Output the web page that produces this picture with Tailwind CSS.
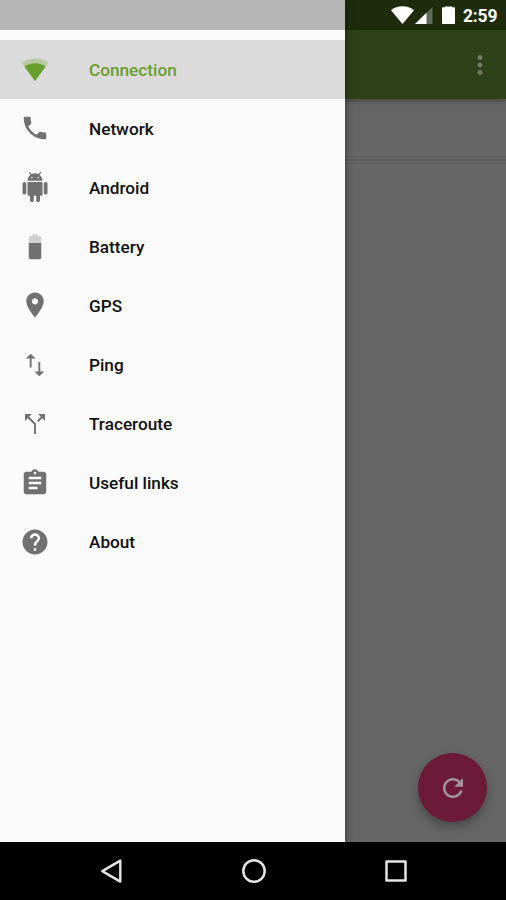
<!DOCTYPE html>
<html lang="en">
<head>
<meta charset="utf-8">
<meta name="viewport" content="width=device-width, initial-scale=1">
<title>Connection</title>
<script src="https://cdn.jsdelivr.net/npm/@tailwindcss/browser@4"></script>
</head>
<body class="font-['Roboto',sans-serif]">
<div class="relative flex h-[900px] w-[506px] flex-col overflow-hidden bg-[#656565]">
  <!-- Status bar -->
  <header class="flex h-[30px] shrink-0 items-center justify-end bg-[#1e2c0d] pr-[8px] text-white">
    <svg class="h-[18px] w-[23px]" viewBox="0 0 23 18" fill="currentColor"><path d="M11.500 18 0 4.200C3 1.700 7 .3 11.500 .3S20 1.700 23 4.200Z"/></svg>
    <svg class="ml-[1px] h-[17px] w-[18px]" viewBox="0 0 18 17" fill="currentColor"><path d="M17.500 0V17H0Z" opacity=".3"/><path d="M11.500 5.800V17H0Z"/></svg>
    <svg class="ml-[9px] h-[18px] w-[13px]" viewBox="0 0 13 18" fill="currentColor"><path d="M3 .5h7v.7h2.200c.5 0 .8.300.8.800v15.200c0 .5-.3.800-.8.800H.8c-.5 0-.8-.3-.8-.8V2c0-.5.3-.8.8-.8H3Z"/></svg>
    <span class="ml-[8px] w-[35px] pt-[2px] text-[17.500px] leading-[30px] font-bold tracking-[-0.2px] whitespace-nowrap">2:59</span>
  </header>
  <!-- Toolbar -->
  <div class="relative flex h-[69px] shrink-0 items-center justify-end bg-[#2f4118] pr-[11px] shadow-[0_2px_5px_rgba(0,0,0,0.3)]">
    <svg class="h-[30px] w-[30px] text-[#747b6b]" viewBox="0 0 24 24" fill="currentColor"><path d="M12 8c1.100 0 2-.9 2-2s-.9-2-2-2-2 .9-2 2 .9 2 2 2zm0 2c-1.100 0-2 .9-2 2s.9 2 2 2 2-.9 2-2-.9-2-2-2zm0 6c-1.100 0-2 .9-2 2s.9 2 2 2 2-.9 2-2-.9-2-2-2z"/></svg>
  </div>
  <main class="flex grow flex-col">
    <div class="h-[62px] shrink-0 border-b-2 border-[#5c5c5c]"></div>
    <div class="flex grow items-end justify-end pr-[19px] pb-[20px]">
      <button class="flex h-[69px] w-[69px] items-center justify-center rounded-full bg-[#6b1a38] text-[#a4959a] shadow-[0_5px_9px_rgba(0,0,0,0.28)]">
        <svg class="h-[30px] w-[30px]" viewBox="0 0 24 24" fill="currentColor"><path d="M17.650 6.350C16.200 4.900 14.210 4 12 4c-4.420 0-7.990 3.580-7.990 8s3.570 8 7.990 8c3.730 0 6.840-2.550 7.730-6h-2.080c-.82 2.330-3.040 4-5.650 4-3.310 0-6-2.690-6-6s2.690-6 6-6c1.660 0 3.140.69 4.220 1.780L13 11h7V4l-2.350 2.350z"/></svg>
      </button>
    </div>
  </main>
  <!-- System navigation -->
  <footer class="relative z-20 flex h-[58px] shrink-0 items-center justify-between bg-black px-[100px] text-[#e4e4e4]">
    <svg class="h-[26px] w-[22px]" viewBox="0 0 22 26" fill="none" stroke="currentColor" stroke-width="2.400" stroke-linejoin="round"><path d="M20.300 2.600v21L2.300 13.100Z"/></svg>
    <svg class="h-[26px] w-[26px]" viewBox="0 0 26 26" fill="none" stroke="currentColor" stroke-width="2.500"><circle cx="13" cy="13" r="10.700"/></svg>
    <svg class="mr-[-1px] h-[22px] w-[22px]" viewBox="0 0 22 22" fill="none" stroke="currentColor" stroke-width="2.500" stroke-linejoin="round"><path d="M1.500 1.500h19v19h-19Z"/></svg>
  </footer>

  <!-- Navigation drawer -->
  <aside class="absolute top-0 left-0 z-10 h-[842px] w-[345px] bg-[#fafafa] shadow-[1px_0_7px_rgba(0,0,0,0.4)]">
    <div class="h-[30px] bg-[#b6b6b6]"></div>
    <nav class="flex flex-col pt-[9.500px] text-[17.200px] font-medium text-[#111]">
      <a class="flex h-[59.120px] items-center bg-[#dbdbdb] pl-[20px] text-[#689f2c]">
        <svg class="h-[30px] w-[30px]" viewBox="0 0 24 24" fill="currentColor"><path d="M12.010 21.500 22.800 6.900C22.300 6.500 18.300 3.500 12 3.500S1.700 6.500 1.200 6.900L12.010 21.500z" opacity=".3"/><path d="M3.500 10 12.010 21.500 20.500 10C20 9.600 16.800 7.400 12 7.400S4 9.600 3.500 10z"/></svg>
        <span class="ml-[39px] pt-[3px]">Connection</span>
      </a>
      <a class="flex h-[59.120px] items-center pl-[20px]">
        <svg class="h-[30px] w-[30px] text-[#717171]" viewBox="0 0 24 24" fill="currentColor"><path d="M6.620 10.790c1.440 2.830 3.760 5.140 6.590 6.590l2.200-2.200c.27-.27.67-.36 1.020-.24 1.120.37 2.330.57 3.570.57.55 0 1 .45 1 1V20c0 .55-.45 1-1 1-9.390 0-17-7.610-17-17 0-.55.45-1 1-1h3.500c.55 0 1 .45 1 1 0 1.250.2 2.450.57 3.570.11.35.03.74-.25 1.020l-2.200 2.200z"/></svg>
        <span class="ml-[39px] pt-[3px]">Network</span>
      </a>
      <a class="flex h-[59.120px] items-center pl-[20px]">
        <svg class="h-[30px] w-[30px] text-[#717171]" viewBox="0 0 24 24" fill="currentColor"><path d="M6 18c0 .55.45 1 1 1h1v3.500c0 .83.67 1.500 1.500 1.500s1.500-.67 1.500-1.500V19h2v3.500c0 .83.67 1.500 1.500 1.500s1.500-.67 1.500-1.500V19h1c.55 0 1-.45 1-1V8H6v10zM3.500 8C2.670 8 2 8.670 2 9.500v7c0 .83.67 1.500 1.500 1.500S5 17.330 5 16.500v-7C5 8.670 4.330 8 3.500 8zm17 0c-.83 0-1.500.67-1.500 1.500v7c0 .83.67 1.500 1.500 1.500s1.500-.67 1.500-1.500v-7c0-.83-.67-1.500-1.500-1.500zm-4.970-5.840l1.300-1.300c.2-.2.2-.51 0-.71-.2-.2-.51-.2-.71 0l-1.480 1.480C13.850 1.230 12.950 1 12 1c-.96 0-1.860.23-2.660.63L7.850.15c-.2-.2-.51-.2-.71 0-.2.2-.2.51 0 .71l1.310 1.310C6.970 3.260 6 5.010 6 7h12c0-1.990-.97-3.750-2.470-4.840zM10 5H9V4h1v1zm5 0h-1V4h1v1z"/></svg>
        <span class="ml-[39px] pt-[3px]">Android</span>
      </a>
      <a class="flex h-[59.120px] items-center pl-[20px]">
        <svg class="h-[30px] w-[30px] text-[#717171]" viewBox="0 0 24 24" fill="currentColor"><path d="M17 5.330C17 4.600 16.400 4 15.670 4H14V2.500h-4V4H8.330C7.600 4 7 4.600 7 5.330V10h10V5.330z" opacity=".3"/><path d="M7 9.500v11.670C7 21.900 7.600 22.500 8.330 22.500h7.330c.74 0 1.340-.6 1.340-1.330V9.500H7z"/></svg>
        <span class="ml-[39px] pt-[3px]">Battery</span>
      </a>
      <a class="flex h-[59.120px] items-center pl-[20px]">
        <svg class="h-[30px] w-[30px] text-[#717171]" viewBox="0 0 24 24" fill="currentColor"><path d="M12 2C8.130 2 5 5.130 5 9c0 5.250 7 13 7 13s7-7.750 7-13c0-3.870-3.130-7-7-7zm0 9.500c-1.380 0-2.500-1.120-2.500-2.500s1.120-2.500 2.500-2.500 2.500 1.120 2.500 2.500-1.120 2.500-2.500 2.500z"/></svg>
        <span class="ml-[39px] pt-[2px]">GPS</span>
      </a>
      <a class="flex h-[59.120px] items-center pl-[20px]">
        <svg class="h-[30px] w-[30px] text-[#717171]" viewBox="0 0 24 24" fill="currentColor"><path d="M16.200 17.200V9.500h-1.500v7.700h-3.200L15.450 21l4-3.800h-3.250zM8.550 3L4.600 6.700h3.200v7.300h1.500V6.700h3.200L8.550 3z"/></svg>
        <span class="ml-[39px] pt-[2px]">Ping</span>
      </a>
      <a class="flex h-[59.120px] items-center pl-[20px]">
        <svg class="h-[30px] w-[30px] text-[#717171]" viewBox="0 0 24 24" fill="currentColor"><path d="M14.500 4l2.200 2.200-3.050 3.050 1.100 1.100 3.050-3.050L20 9.500V4zM9.500 4H4v5.500l2.200-2.200 5.050 5V20h1.500v-8.350L7.300 6.200z"/></svg>
        <span class="ml-[39px] pt-[2px]">Traceroute</span>
      </a>
      <a class="flex h-[59.120px] items-center pl-[20px]">
        <svg class="h-[30px] w-[30px] text-[#717171]" viewBox="0 0 24 24" fill="currentColor"><path d="M19 3h-4.180C14.400 1.840 13.300 1 12 1c-1.300 0-2.400.84-2.820 2H5c-1.100 0-2 .9-2 2v14c0 1.100.9 2 2 2h14c1.100 0 2-.9 2-2V5c0-1.100-.9-2-2-2zm-7 0c.55 0 1 .45 1 1s-.45 1-1 1-1-.45-1-1 .45-1 1-1zm2 14H7v-2h7v2zm3-4H7v-2h10v2zm0-4H7V7h10v2z"/></svg>
        <span class="ml-[39px] pt-[2px]">Useful links</span>
      </a>
      <a class="flex h-[59.120px] items-center pl-[20px]">
        <svg class="h-[30px] w-[30px] text-[#717171]" viewBox="0 0 24 24" fill="currentColor"><path d="M12 2C6.480 2 2 6.480 2 12s4.480 10 10 10 10-4.480 10-10S17.520 2 12 2zm1 17h-2v-2h2v2zm2.070-7.750l-.9.920C13.450 12.900 13 13.500 13 15h-2v-.5c0-1.100.45-2.100 1.170-2.830l1.240-1.260c.37-.36.59-.86.59-1.410 0-1.100-.9-2-2-2s-2 .9-2 2H8c0-2.210 1.790-4 4-4s4 1.790 4 4c0 .88-.36 1.680-.93 2.250z"/></svg>
        <span class="ml-[39px] pt-[2px]">About</span>
      </a>
    </nav>
  </aside>
</div>
</body>
</html>
